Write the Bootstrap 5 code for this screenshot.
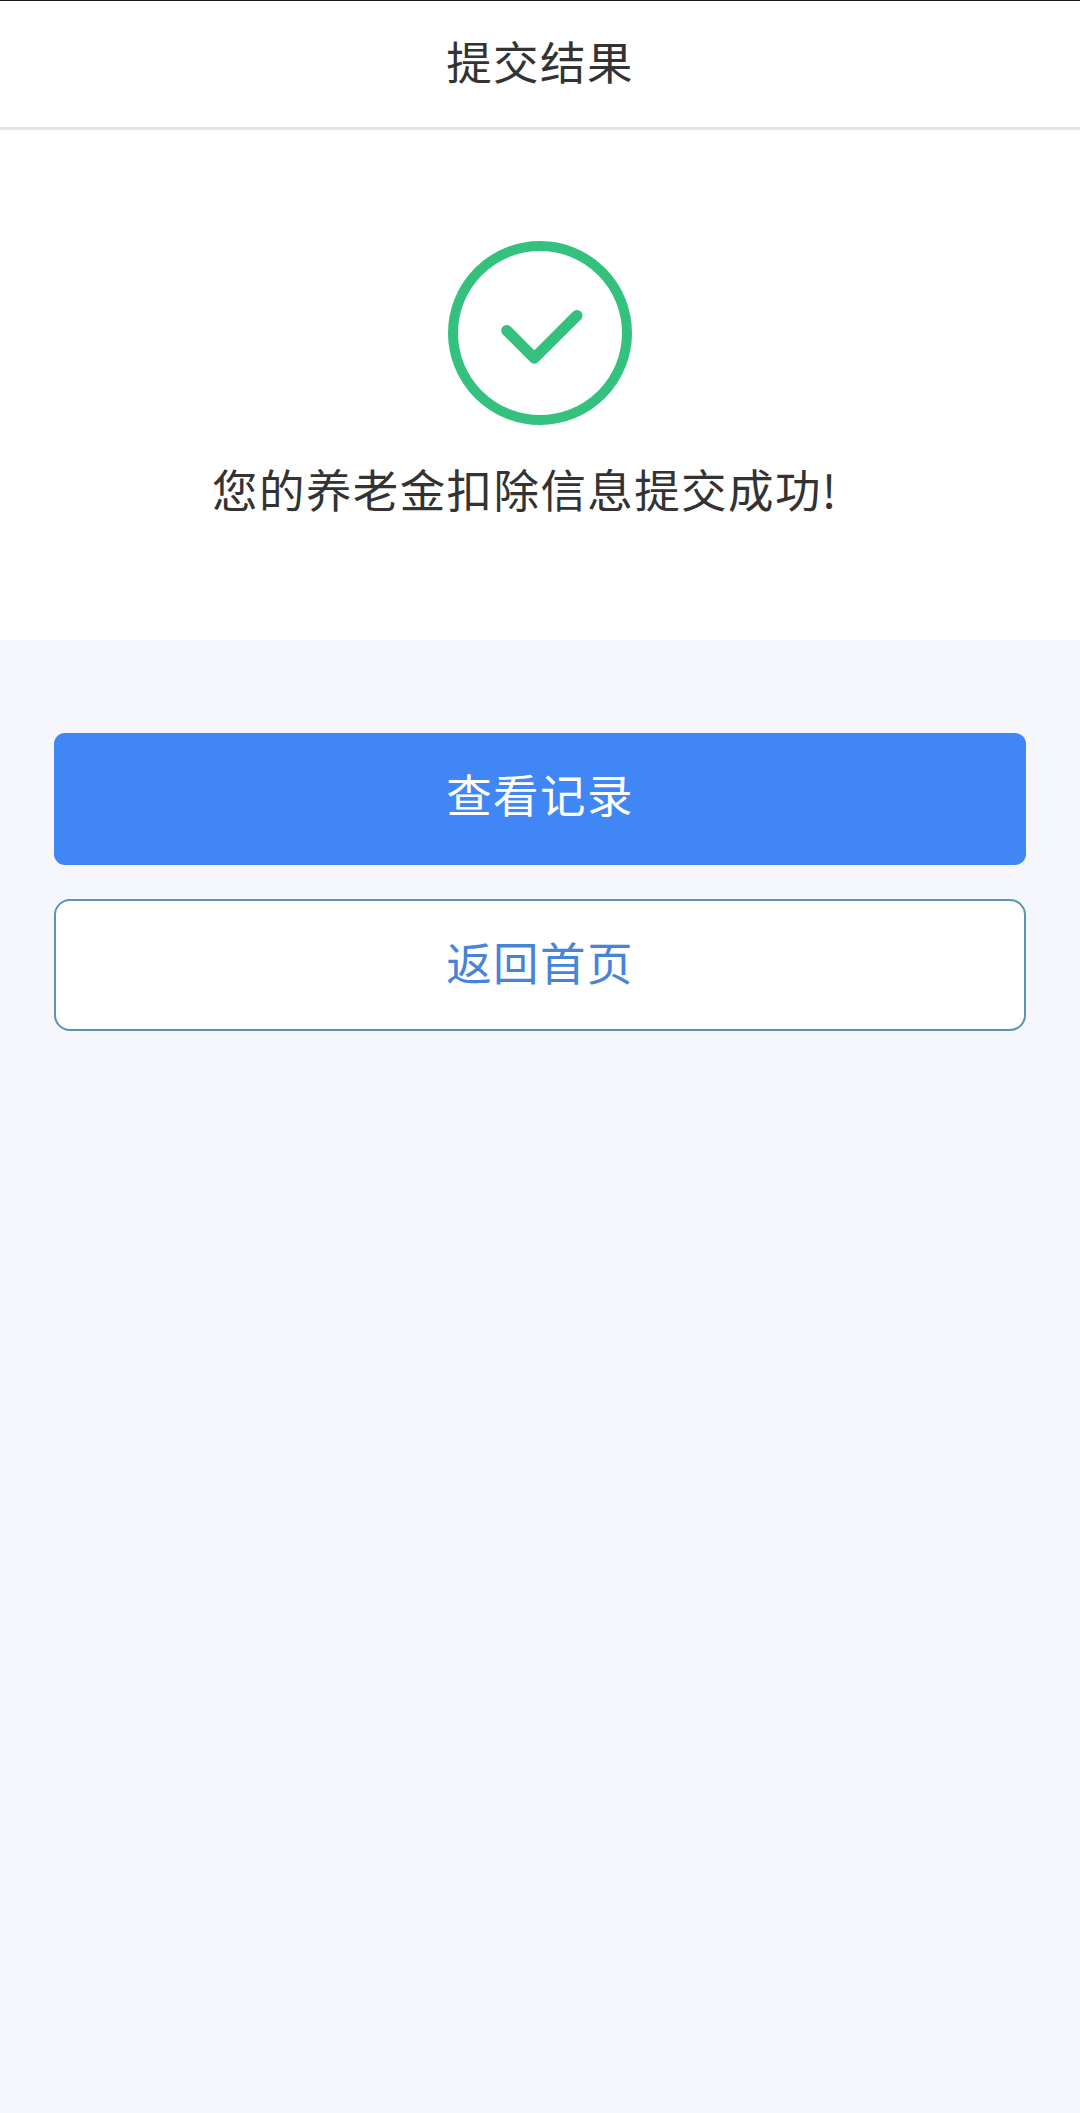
<!DOCTYPE html>
<html lang="zh-CN">
<head>
<meta charset="utf-8">
<meta name="viewport" content="width=device-width, initial-scale=1">
<title>提交结果</title>
<link rel="stylesheet" href="https://cdn.jsdelivr.net/npm/bootstrap@5.3.0/dist/css/bootstrap.min.css">
<style>
  body {
    background: #f5f7fc;
    color: #333;
    font-family: "Noto Sans CJK SC", sans-serif;
    font-size: 45.5px;
    line-height: 70px;
    letter-spacing: 1.4px;
  }
  .title-bar { height: 130px; border-top: 1px solid #1b191c; border-bottom: 3px solid #e5e5e5; padding-bottom: 8px; }
  .title-bar h1 { font-size: inherit; line-height: inherit; font-weight: 400; }
  .result-panel { height: 510px; padding-top: 110px; }
  .result-text { margin-top: 27px; padding-right: 30px; }
  .action-list { padding: 93px 54px 0; gap: 34px; }
  .action-btn {
    height: 132px;
    font-size: inherit;
    line-height: inherit;
    letter-spacing: inherit;
    --bs-btn-padding-y: 0;
    --bs-btn-border-width: 0;
    --bs-btn-border-radius: 11px;
  }
  .btn-records { --bs-btn-bg: #4086f4; padding-bottom: 12px; }
  .btn-home {
    --bs-btn-color: #4784d8;
    --bs-btn-bg: #fff;
    --bs-btn-border-width: 2px;
    --bs-btn-border-color: #5b93b5;
    --bs-btn-border-radius: 16px;
    padding-bottom: 8px;
  }
</style>
<script src="https://cdn.jsdelivr.net/npm/bootstrap@5.3.0/dist/js/bootstrap.bundle.min.js" defer></script>
</head>
<body>
<header class="title-bar bg-white d-flex align-items-center justify-content-center">
  <h1 class="m-0">提交结果</h1>
</header>
<main>
  <section class="result-panel bg-white d-flex flex-column align-items-center">
    <svg width="186" height="186" viewBox="0 0 186 186" fill="none" stroke="#34c17e" aria-hidden="true">
      <circle cx="93" cy="93" r="87" stroke-width="10"/>
      <path d="M59.7 90.5L87.3 118.2L130 75.5" stroke-width="11" stroke-linecap="round" stroke-linejoin="round"/>
    </svg>
    <p class="result-text mb-0 text-nowrap">您的养老金扣除信息提交成功!</p>
  </section>
  <div class="action-list d-flex flex-column">
    <button type="button" class="btn btn-primary action-btn btn-records d-flex align-items-center justify-content-center">查看记录</button>
    <button type="button" class="btn action-btn btn-home d-flex align-items-center justify-content-center">返回首页</button>
  </div>
</main>
</body>
</html>
